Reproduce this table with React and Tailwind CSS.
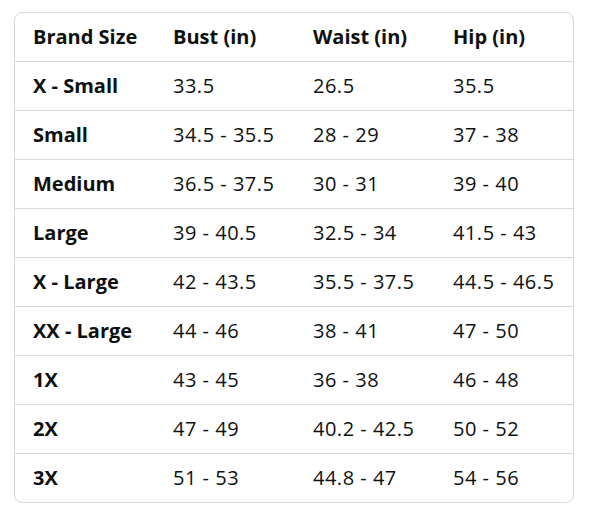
import React from 'react';

const rows = [
  ['X - Small', '33.5', '26.5', '35.5'],
  ['Small', '34.5 - 35.5', '28 - 29', '37 - 38'],
  ['Medium', '36.5 - 37.5', '30 - 31', '39 - 40'],
  ['Large', '39 - 40.5', '32.5 - 34', '41.5 - 43'],
  ['X - Large', '42 - 43.5', '35.5 - 37.5', '44.5 - 46.5'],
  ['XX - Large', '44 - 46', '38 - 41', '47 - 50'],
  ['1X', '43 - 45', '36 - 38', '46 - 48'],
  ['2X', '47 - 49', '40.2 - 42.5', '50 - 52'],
  ['3X', '51 - 53', '44.8 - 47', '54 - 56'],
];

const App = () => {
  return (
    <div className="w-[592px] h-[514px] bg-white pl-[14px] pt-[12px] text-[#0f1111]" style={{ fontFamily: '"Open Sans", "Noto Sans", sans-serif' }}>
      <div className="w-[560px] border border-[#d5d9d9] rounded-[8px] overflow-hidden">
        <div className="grid grid-cols-[140px_140px_140px_138px] h-[48px] items-center text-[20px] font-bold">
          <div className="pl-[18px]">Brand Size</div>
          <div className="pl-[18px]">Bust (in)</div>
          <div className="pl-[18px]">Waist (in)</div>
          <div className="pl-[18px]">Hip (in)</div>
        </div>
        {rows.map((r) => (
          <div key={r[0]} className="grid grid-cols-[140px_140px_140px_138px] h-[49px] items-center text-[20px] border-t border-[#d5d9d9]">
            <div className="pl-[18px] font-bold">{r[0]}</div>
            <div className="pl-[18px] tracking-[0.5px]">{r[1]}</div>
            <div className="pl-[18px] tracking-[0.5px]">{r[2]}</div>
            <div className="pl-[18px] tracking-[0.5px]">{r[3]}</div>
          </div>
        ))}
      </div>
    </div>
  );
};

export default App;
